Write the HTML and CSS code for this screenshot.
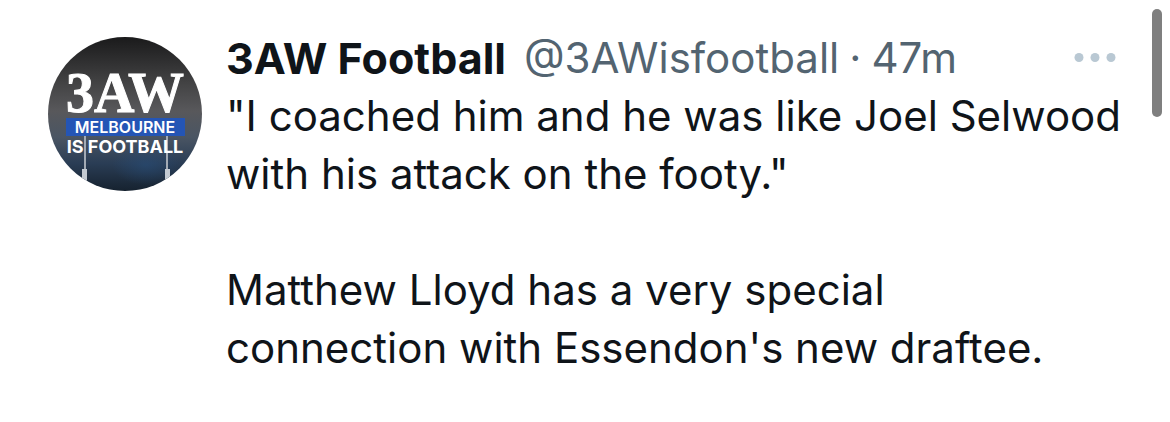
FILE: index.html
```html
<!DOCTYPE html>
<html lang="en">
<head>
    <meta charset="UTF-8">
    <meta name="viewport" content="width=device-width, initial-scale=1.0">
    <title>3AW Football</title>
    <link rel="stylesheet" href="styles.css">
</head>
<body>
    <article class="tweet">
        <svg class="avatar" viewBox="0 0 154 154" role="img" aria-label="3AW Melbourne is football">
            <defs>
                <clipPath id="round"><circle cx="77" cy="77" r="77"/></clipPath>
                <linearGradient id="sky" x1="0" y1="0" x2="0" y2="1">
                    <stop offset="0" stop-color="#1a1a1b"/>
                    <stop offset="0.3" stop-color="#434344"/>
                    <stop offset="0.48" stop-color="#58585b"/>
                    <stop offset="0.65" stop-color="#4a5563"/>
                    <stop offset="0.82" stop-color="#2a3d55"/>
                    <stop offset="1" stop-color="#16222f"/>
                </linearGradient>
                <radialGradient id="glow">
                    <stop offset="0" stop-color="#27507f" stop-opacity="0.5"/>
                    <stop offset="1" stop-color="#27507f" stop-opacity="0"/>
                </radialGradient>
            </defs>
            <g clip-path="url(#round)">
                <rect width="154" height="154" fill="url(#sky)"/>
                <ellipse cx="98" cy="128" rx="34" ry="20" fill="url(#glow)"/>
                <path d="M37 98V134M119 98V134" stroke="#a3abb5" stroke-width="2"/>
                <path d="M36.500 132V154M119.500 132V154" stroke="#c3cad2" stroke-width="5"/>
                <rect x="18" y="81" width="119" height="18" fill="#2455b5"/>
                <text class="logo-name" x="77" y="75">3AW</text>
                <text class="logo-city" x="77" y="96">MELBOURNE</text>
                <text class="logo-sport" x="77" y="116">IS FOOTBALL</text>
            </g>
        </svg>
        <div class="content">
            <header class="meta">
                <span class="name">3AW Football</span>
                <a class="handle" href="#">@3AWisfootball</a>
                <span class="dot">·</span>
                <time class="time">47m</time>
                <button class="more" type="button" aria-label="More">
                    <svg width="42" height="10" viewBox="0 0 42 10" fill="currentColor">
                        <circle cx="5" cy="4.5" r="4.5"/>
                        <circle cx="21" cy="4.5" r="4.5"/>
                        <circle cx="37" cy="4.5" r="4.5"/>
                    </svg>
                </button>
            </header>
            <p class="text">"I coached him and he was like Joel Selwood with his attack on the footy."</p>
            <p class="text">Matthew Lloyd has a very special<br>connection with Essendon's new draftee.</p>
        </div>
    </article>
    <div class="scroll-thumb"></div>
</body>
</html>
```
FILE: styles.css
```css
body {
    margin: 0;
    background-color: #fff;
    color: #0f1419;
    font-family: Inter, "Liberation Sans", sans-serif;
    font-size: 42px;
    line-height: 58px;
}

.tweet {
    display: flex;
    align-items: flex-start;
    gap: 24px;
    padding: 29px 44px 40px 48px;
}

.avatar {
    flex: none;
    width: 154px;
    height: 154px;
    margin-top: 8px;
}

.logo-name,
.logo-city,
.logo-sport {
    fill: #fff;
    text-anchor: middle;
    font-weight: bold;
}

.logo-name {
    font-family: "Liberation Serif", serif;
    font-size: 56px;
    stroke: #fff;
    stroke-width: 1px;
}

.logo-city {
    font-size: 16px;
    font-weight: 600;
}

.logo-sport {
    font-size: 18px;
}

.content {
    flex: 1;
    min-width: 0;
}

.meta {
    display: flex;
    align-items: center;
    gap: 10px;
    white-space: nowrap;
}

.name {
    margin-right: 8px;
    font-size: 43px;
    font-weight: bold;
}

.handle,
.dot,
.time {
    color: #536471;
    text-decoration: none;
}

.more {
    display: flex;
    margin-left: auto;
    margin-right: 10px;
    padding: 0;
    border: none;
    background: none;
    color: #b9c8d3;
    cursor: pointer;
}

.text {
    margin: 0 0 58px;
}

.text:last-child {
    margin-bottom: 0;
}

.scroll-thumb {
    position: absolute;
    top: 9px;
    right: 8px;
    width: 10px;
    height: 108px;
    border-radius: 5px;
    background-color: #7f7f7f;
}
```
